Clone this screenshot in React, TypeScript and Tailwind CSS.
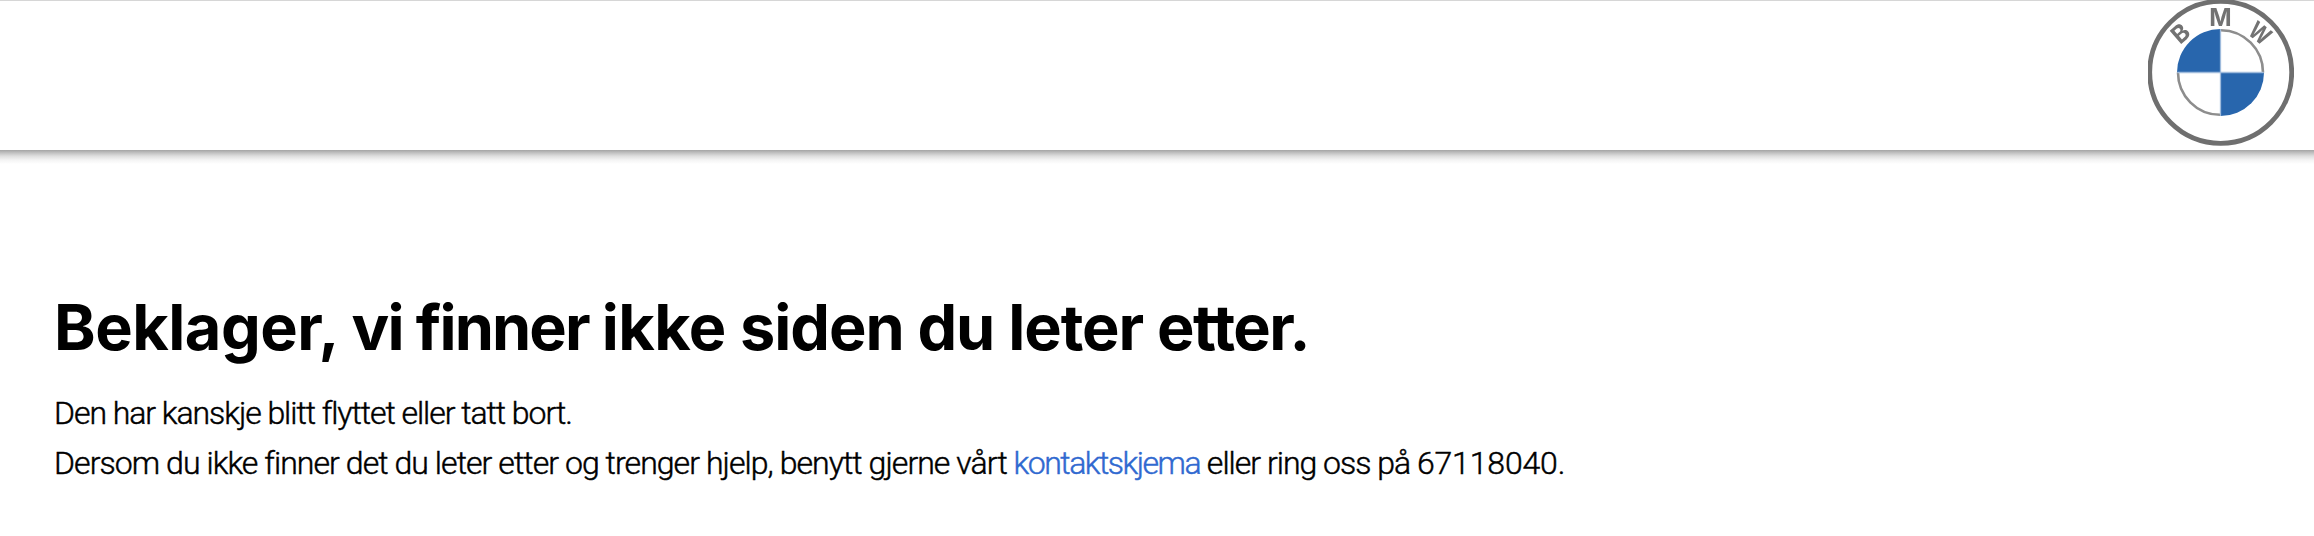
function Logo() {
  return (
    <svg viewBox="0 0 146 146" className="h-[146px] w-[146px] blur-[0.7px]" fill="none">
      <circle cx="72.7" cy="72.3" r="71" stroke="#6f6f6f" strokeWidth="4.8" />
      <path d="M72.5 72.5V29A43.5 43.5 0 0 0 29 72.5Z" fill="#2866ad" />
      <path d="M72.5 72.5V116A43.5 43.5 0 0 0 116 72.5Z" fill="#2866ad" />
      <path d="M73 30.2A42.3 42.3 0 0 1 115 72.5M72 114.8A42.3 42.3 0 0 1 30 72.5" stroke="#8d8d8d" strokeWidth="2.6" />
      <path d="M29.5 72.5H115.5M72.5 29.5V115.5" stroke="#9fbbdc" strokeWidth="1.3" />
      <g fill="#727272" textAnchor="middle" className="font-['Inter',sans-serif] text-[24px] font-bold">
        <text x="72.5" y="25.5">M</text>
        <text transform="translate(32.2 33.3) rotate(-41)" y="8.7">B</text>
        <text transform="translate(112 33) rotate(38) scale(0.84 1)" y="8.7">W</text>
      </g>
    </svg>
  );
}

export default function App() {
  return (
    <div className="min-h-[536px] bg-white font-['Roboto','Liberation_Sans',sans-serif] text-black">
      <header className="flex h-[150px] justify-end border-t border-[#d6d6d6] pr-5">
        <div className="-mt-px">
          <Logo />
        </div>
      </header>
      <div className="h-[14px] bg-[linear-gradient(#a4a4a4,#bebebe_18%,#dedede_43%,#f4f4f4_72%,#ffffff)]" />
      <main className="pt-[125px] pl-[54px] whitespace-nowrap">
        <h1 className="font-['Inter',sans-serif] text-[63px] leading-[76px] font-bold tracking-[-1.05px]">
          <span className="tracking-[-0.5px]">Beklager, </span>
          <span className="tracking-[-1.8px]">vi </span>
          <span className="tracking-[-1.9px]">finner </span>
          <span className="tracking-[-0.6px]">ikke </span>
          siden du leter <span className="tracking-[-1.5px]">etter.</span>
        </h1>
        <div className="mt-[23px] text-[32px] leading-[50px] font-light [-webkit-text-stroke:0.45px_currentColor]">
          <p className="tracking-[-1.05px]">Den har kanskje blitt flyttet eller tatt bort.</p>
          <p>
            <span className="tracking-[-0.94px]">Dersom du ikke finner det du leter etter og trenger hjelp, benytt gjerne vårt </span>
            <a href="#" className="tracking-[-1.5px] text-[#3069d0]">kontaktskjema</a>
            <span className="tracking-[-1px]"> eller ring oss på </span>
            <span className="tracking-[-0.15px]">67118040.</span>
          </p>
        </div>
      </main>
    </div>
  );
}
